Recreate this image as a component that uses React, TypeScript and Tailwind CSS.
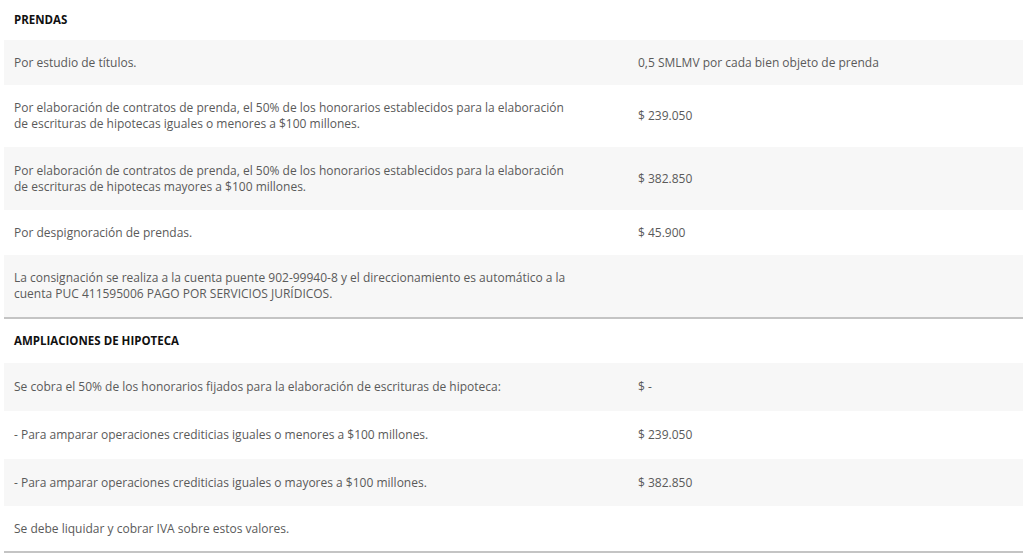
import React from "react";

type Row = { left: string[]; right?: string; h: string; gray: boolean };

const prendas: Row[] = [
  { left: ["Por estudio de títulos."], right: "0,5 SMLMV por cada bien objeto de prenda", h: "h-[45px]", gray: true },
  {
    left: [
      "Por elaboración de contratos de prenda, el 50% de los honorarios establecidos para la elaboración",
      "de escrituras de hipotecas iguales o menores a $100 millones.",
    ],
    right: "$ 239.050",
    h: "h-[62px]",
    gray: false,
  },
  {
    left: [
      "Por elaboración de contratos de prenda, el 50% de los honorarios establecidos para la elaboración",
      "de escrituras de hipotecas mayores a $100 millones.",
    ],
    right: "$ 382.850",
    h: "h-[63px]",
    gray: true,
  },
  { left: ["Por despignoración de prendas."], right: "$ 45.900", h: "h-[45px]", gray: false },
  {
    left: [
      "La consignación se realiza a la cuenta puente 902-99940-8 y el direccionamiento es automático a la",
      "cuenta PUC 411595006 PAGO POR SERVICIOS JURÍDICOS.",
    ],
    h: "h-[62px]",
    gray: true,
  },
];

const ampliaciones: Row[] = [
  { left: ["Se cobra el 50% de los honorarios fijados para la elaboración de escrituras de hipoteca:"], right: "$ -", h: "h-[48px]", gray: true },
  { left: ["- Para amparar operaciones crediticias iguales o menores a $100 millones."], right: "$ 239.050", h: "h-[48px]", gray: false },
  { left: ["- Para amparar operaciones crediticias iguales o mayores a $100 millones."], right: "$ 382.850", h: "h-[47px]", gray: true },
  { left: ["Se debe liquidar y cobrar IVA sobre estos valores."], h: "h-[45px]", gray: false },
];

function TableRow({ row }: { row: Row }) {
  return (
    <div className={`flex items-center ${row.h} ${row.gray ? "bg-[#f7f7f7]" : "bg-white"}`}>
      <div className="w-[624px] pl-[10px] pr-[20px] leading-[16px]">
        {row.left.map((l, i) => (
          <div key={i} className="whitespace-nowrap">{l}</div>
        ))}
      </div>
      <div className="flex-1 pl-[10px]">{row.right}</div>
    </div>
  );
}

function Header({ title, h }: { title: string; h: string }) {
  return (
    <div className={`flex items-center ${h} pl-[10px] font-bold text-[11.5px] text-[#111]`}>{title}</div>
  );
}

export default function App() {
  return (
    <div
      className="w-[1029px] h-[560px] bg-white text-[12px] text-[#5a5a5a]"
      style={{ fontFamily: "'Open Sans', sans-serif" }}
    >
      <div className="ml-[4px] mr-[6px]">
        <Header title="PRENDAS" h="h-[40px]" />
        {prendas.map((r, i) => (
          <TableRow key={i} row={r} />
        ))}
        <div className="h-[2px] bg-[#c4c4c4]" />
        <Header title="AMPLIACIONES DE HIPOTECA" h="h-[44px]" />
        {ampliaciones.map((r, i) => (
          <TableRow key={i} row={r} />
        ))}
        <div className="h-[2px] bg-[#c4c4c4]" />
      </div>
    </div>
  );
}
